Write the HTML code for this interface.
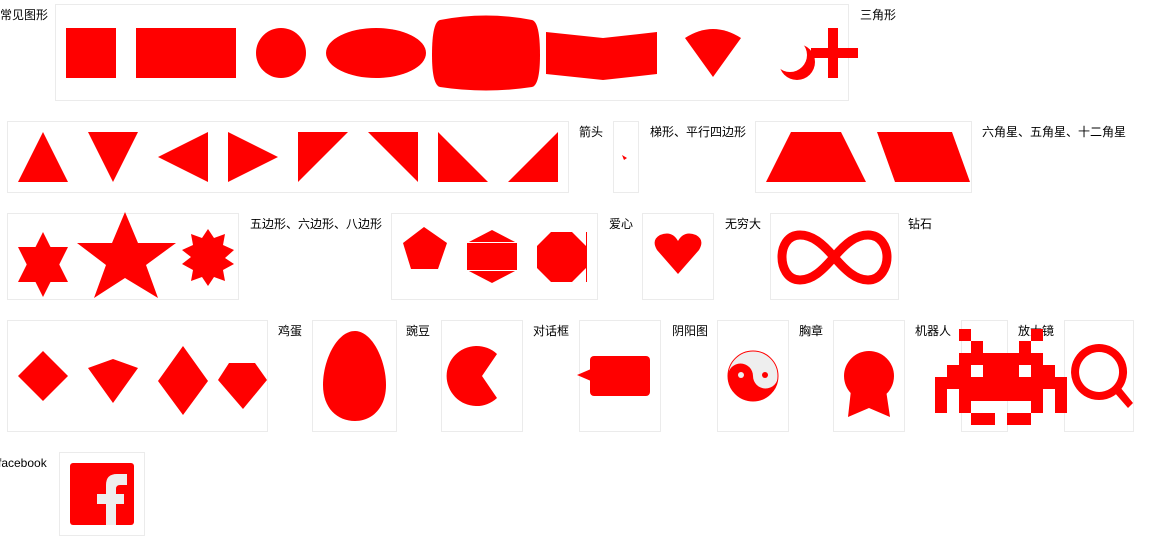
<!DOCTYPE html>
<html><head><meta charset="utf-8"><style>
html,body{margin:0;padding:0;background:#fff;width:1171px;height:551px;overflow:hidden}
svg{display:block}
text{font-family:"Liberation Sans","Noto Sans CJK SC",sans-serif;font-size:12px;fill:#000}
.b{fill:none;stroke:#ebebeb;stroke-width:1}
</style></head><body>
<svg width="1171" height="551" viewBox="0 0 1171 551">
<g class="bx">
<rect class="b" x="55.5" y="4.5" width="793" height="96"/>
<rect class="b" x="7.5" y="121.5" width="561" height="71"/>
<rect class="b" x="613.5" y="121.5" width="25" height="71"/>
<rect class="b" x="755.5" y="121.5" width="216" height="71"/>
<rect class="b" x="7.5" y="213.5" width="231" height="86"/>
<rect class="b" x="391.5" y="213.5" width="206" height="86"/>
<rect class="b" x="642.5" y="213.5" width="71" height="86"/>
<rect class="b" x="770.5" y="213.5" width="128" height="86"/>
<rect class="b" x="7.5" y="320.5" width="260" height="111"/>
<rect class="b" x="312.5" y="320.5" width="84" height="111"/>
<rect class="b" x="441.5" y="320.5" width="81" height="111"/>
<rect class="b" x="579.5" y="320.5" width="81" height="111"/>
<rect class="b" x="717.5" y="320.5" width="71" height="111"/>
<rect class="b" x="833.5" y="320.5" width="71" height="111"/>
<rect class="b" x="961.5" y="320.5" width="46" height="111"/>
<rect class="b" x="1064.5" y="320.5" width="69" height="111"/>
<rect class="b" x="59.5" y="452.5" width="85" height="83"/>
</g>
<text x="0" y="19">常见图形</text>
<text x="860" y="19">三角形</text>
<text x="579" y="136">箭头</text>
<text x="650" y="136">梯形、平行四边形</text>
<text x="982" y="136">六角星、五角星、十二角星</text>
<text x="250" y="228">五边形、六边形、八边形</text>
<text x="609" y="228">爱心</text>
<text x="725" y="228">无穷大</text>
<text x="908" y="228">钻石</text>
<text x="278" y="335">鸡蛋</text>
<text x="406" y="335">豌豆</text>
<text x="533" y="335">对话框</text>
<text x="672" y="335">阴阳图</text>
<text x="799" y="335">胸章</text>
<text x="915" y="335">机器人</text>
<text x="-2" y="467">facebook</text>
<g fill="#f00">
<rect x="66" y="28" width="50" height="50"/>
<rect x="136" y="28" width="100" height="50"/>
<ellipse cx="281" cy="53" rx="25" ry="25"/>
<ellipse cx="376" cy="53" rx="50" ry="25"/>
<path d="M440 20 Q486 11 532 20 Q540 22 540 55 Q540 85 532 87 Q486 94 440 87 Q432 85 432 55 Q432 22 440 20Z"/>
<path d="M546 32 L603 38 L657 32 L657 74 L603 80 L546 74Z"/>
<path d="M685 38 Q713 20 741 38 L713 77Z"/>
<circle cx="797" cy="62" r="18"/>
<circle cx="790" cy="55" r="17" fill="#fff"/>
<rect x="828" y="28" width="10" height="50"/>
<rect x="811" y="48" width="47" height="10"/>
<polygon points="43,132 68,182 18,182"/>
<polygon points="88,132 138,132 113,182"/>
<polygon points="208,132 208,182 158,157"/>
<polygon points="228,132 228,182 278,157"/>
<polygon points="298,132 348,132 298,182"/>
<polygon points="368,132 418,132 418,182"/>
<polygon points="438,132 438,182 488,182"/>
<polygon points="558,132 558,182 508,182"/>
<path d="M622 155 L627 158 L624 160 Z" />
<polygon points="791,132 841,132 866,182 766,182"/>
<polygon points="877,132 952,132 970,182 895,182"/>
<polygon points="43,232 68,282 18,282"/>
<polygon points="43,297 68,247 18,247"/>
<polygon points="125,212 138,243 176,243 146,265 158,298 125,278 94,298 106,265 77,243 112,243"/>
<polygon points="208,229 214,238 225,234 223,245 234,250 225,258 234,264 223,270 225,281 214,277 208,286 202,277 191,281 193,270 182,264 191,257 182,250 193,245 191,234 202,238"/>
<polygon points="424,227 447,243 438,269 411,269 403,243"/>
<polygon points="492,230 517,243 517,270 492,283 467,270 467,243"/>
<rect x="467" y="242" width="50" height="1" fill="#fff"/>
<rect x="467" y="270" width="50" height="1" fill="#fff"/>
<polygon points="551,232 572,232 586,246 586,268 572,282 551,282 537,268 537,246"/>
<rect x="586" y="232" width="1" height="50"/>
<path d="M678 274 L657 250 Q651 240 660 235 Q672 230 678 241 Q684 230 696 235 Q705 240 699 250 Z"/>
<path d="M834 257 C822 243 812 235 800 235 C787 235 782 247 782 257 C782 267 787 280 800 280 C812 280 822 271 834 257 C846 243 856 235 868 235 C881 235 887 247 887 257 C887 267 881 280 868 280 C856 280 846 271 834 257Z" fill="none" stroke="#f00" stroke-width="9"/>
<polygon points="43,351 68,376 43,401 18,376"/>
<polygon points="88,368 113,359 138,368 113,403"/>
<polygon points="183,346 208,381 183,415 158,381"/>
<polygon points="229,363 255,363 267,380 243,409 218,380"/>
<path d="M355 331 C372 331 386 360 386 385 C386 408 372 421 355 421 C337 421 323 408 323 385 C323 360 337 331 355 331Z"/>
<path d="M497 354 A30 30 0 1 0 497 398 L482 376 Z"/>
<rect x="590" y="356" width="60" height="40" rx="4"/>
<polygon points="577,375 591,369 591,381"/>
<circle cx="753" cy="376" r="25" fill="#eee" stroke="#f00" stroke-width="1"/>
<path d="M728 376 A25 25 0 0 0 778 376 A12.5 12.5 0 0 1 753 376 A12.5 12.5 0 0 0 728 376Z"/>
<circle cx="741" cy="375" r="3" fill="#eee"/>
<circle cx="765" cy="375" r="3"/>
<ellipse cx="869" cy="376" rx="25" ry="25"/>
<polygon points="851,390 886,390 890,417 869,408 848,417"/>
<path d="M1099 348 A24 24 0 1 0 1099.1 348 Z" fill="none" stroke="#f00" stroke-width="8"/>
<polygon points="1114,392 1120,387 1133,403 1128,408"/>
<rect x="70" y="463" width="64" height="62" rx="3"/>
<path fill="#eee" d="M106 525 V504 H97 V494 H106 V485 Q106 474 117 474 H127 V485 H120 Q116 485 116 489 V494 H124 V504 H116 V525Z"/>
</g>
<text x="1018" y="335">放大镜</text>
<g fill="#f00">
<rect x="959" y="329" width="12" height="12"/><rect x="1031" y="329" width="12" height="12"/>
<rect x="971" y="341" width="12" height="12"/><rect x="1019" y="341" width="12" height="12"/>
<rect x="959" y="353" width="84" height="12"/>
<rect x="947" y="365" width="24" height="12"/><rect x="983" y="365" width="36" height="12"/><rect x="1031" y="365" width="24" height="12"/>
<rect x="935" y="377" width="132" height="12"/>
<rect x="935" y="389" width="12" height="24"/><rect x="959" y="389" width="84" height="12"/><rect x="1055" y="389" width="12" height="24"/>
<rect x="959" y="401" width="12" height="12"/><rect x="1031" y="401" width="12" height="12"/>
<rect x="971" y="413" width="24" height="12"/><rect x="1007" y="413" width="24" height="12"/>
</g>
</svg>
</body></html>
